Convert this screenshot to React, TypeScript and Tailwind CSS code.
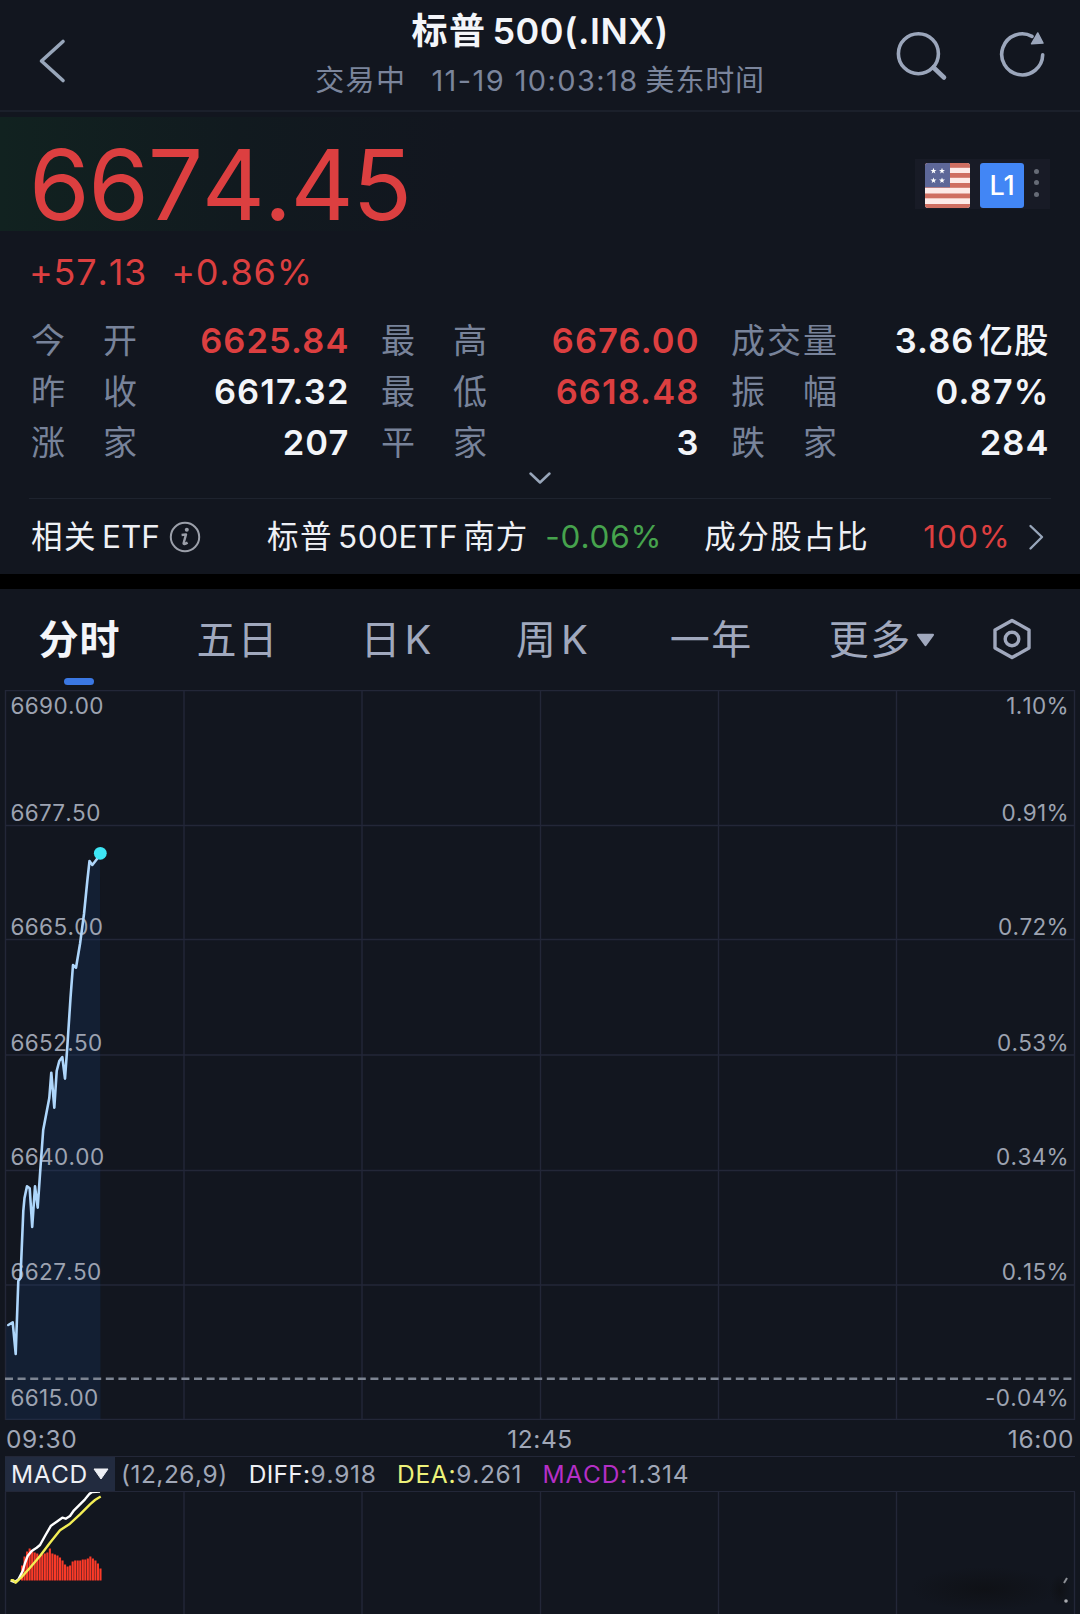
import React from "react";

const RED = "text-[#dc3f40]";
const WHITE = "text-[#f3f5f9]";

type Stat = { label: string; value: string; unit?: string; tone: string };

const stats: Stat[][] = [
  [
    { label: "今开", value: "6625.84", tone: RED },
    { label: "最高", value: "6676.00", tone: RED },
    { label: "成交量", value: "3.86", unit: "亿股", tone: WHITE },
  ],
  [
    { label: "昨收", value: "6617.32", tone: WHITE },
    { label: "最低", value: "6618.48", tone: RED },
    { label: "振幅", value: "0.87%", tone: WHITE },
  ],
  [
    { label: "涨家", value: "207", tone: WHITE },
    { label: "平家", value: "3", tone: WHITE },
    { label: "跌家", value: "284", tone: WHITE },
  ],
];

const gridX = [5.5, 184, 362, 540.5, 718.5, 896.5, 1074.5];
const gridY = [0.5, 135.5, 249.5, 365, 480.5, 595, 729.5];

const axis = [
  { price: "6690.00", pct: "1.10%", place: "top-[2px]" },
  { price: "6677.50", pct: "0.91%", place: "top-[109px]" },
  { price: "6665.00", pct: "0.72%", place: "top-[223px]" },
  { price: "6652.50", pct: "0.53%", place: "top-[339px]" },
  { price: "6640.00", pct: "0.34%", place: "top-[453px]" },
  { price: "6627.50", pct: "0.15%", place: "top-[568px]" },
  { price: "6615.00", pct: "-0.04%", place: "top-[694px]" },
];

const pricePoints: [number, number][] = [
  [8.3, 635], [12.7, 632.3], [15.7, 664], [18.3, 591], [20.5, 588], [23.3, 521], [24.5, 508],
  [27, 496.3], [29.7, 498.3], [32.2, 537], [35, 496.3], [37.7, 517.7], [40.5, 477], [43.2, 440],
  [49.3, 408], [51.3, 382.7], [54.3, 417.7], [56.7, 381], [59.3, 371], [62.3, 367], [65, 388.7],
  [67.5, 354], [70.5, 308], [73, 275], [76, 277.7], [80, 254], [84, 224], [87.3, 191],
  [89.5, 171], [92.3, 175], [97, 169], [100, 163.3],
];

const bars = [
  15, 24, 29, 32, 30, 28, 27, 25, 26, 27, 28, 32, 27, 26, 25, 23, 20, 16, 14, 15, 19, 20, 20, 20,
  21, 21, 22, 24, 22, 20, 17, 12,
];

const toPath = (pts: [number, number][]) => pts.map(([x, y]) => `${x},${y}`).join(" ");

function Header() {
  return (
    <header className="flex h-[112px] items-start justify-between border-b-2 border-[#1b202b]">
      <svg className="h-[100px] w-[260px]" viewBox="0 0 260 100" fill="none">
        <path d="M63 41.5L41.5 61L63 80.5" stroke="#98a6ba" strokeWidth="3.6" strokeLinecap="round" strokeLinejoin="round" />
      </svg>
      <div className="flex flex-col items-center">
        <h1 className="mt-[13px] flex h-9 items-center text-[36px] leading-9 font-semibold whitespace-nowrap text-[#f3f5f9]">
          <span className="tracking-[1.5px]">标普</span>
          <span className="ml-[6px] tracking-[0.5px]">500(.INX)</span>
        </h1>
        <div className="mt-3 flex h-10 items-center text-[29px] leading-10 whitespace-nowrap text-[#7b859c]">
          <span className="tracking-[1.4px]">交易中</span>
          <span className="ml-[25px] tracking-[1.4px] [font-kerning:none]">11-19 10:03:18</span>
          <span className="ml-[7px] tracking-[0.8px]">美东时间</span>
        </div>
      </div>
      <svg className="h-[100px] w-[260px]" viewBox="820 0 260 100" fill="none" stroke="#9ba6bb" strokeWidth="3.6" strokeLinecap="round">
        <circle cx="918.4" cy="53.7" r="20" />
        <path d="M933.5 67.5L944 77.5" strokeWidth="4.6" />
        <path d="M1042.7 54.8A20.5 20.5 0 1 1 1032 36.4" />
        <path d="M1037.8 33L1043 43L1031.5 43.8Z" fill="#9ba6bb" strokeWidth="1.5" strokeLinejoin="round" />
      </svg>
    </header>
  );
}

function Flag() {
  return (
    <svg className="size-[45px] rounded-[3px]" viewBox="0 0 45 45">
      <rect width="45" height="45" fill="#fdebe9" />
      {[0, 10, 20, 30.5, 41].map((y) => (
        <rect key={y} y={y} width="45" height="4.8" fill="#cf6f62" />
      ))}
      <rect width="25" height="24.3" fill="#5d6798" />
      {[[8.5, 7.8], [17, 7.8], [8.5, 17.4], [17, 17.4]].map(([x, y]) => (
        <path
          key={`${x}-${y}`}
          transform={`translate(${x} ${y})`}
          d="M0 -3L.8 -.9L3 -.9L1.2 .5L1.8 2.7L0 1.4L-1.8 2.7L-1.2 .5L-3 -.9L-.8 -.9Z"
          fill="#fff"
        />
      ))}
    </svg>
  );
}

function Quote() {
  return (
    <section>
      <div className="mt-[5px] flex h-[114px] items-start justify-between bg-linear-to-r from-[#112220] via-[#111a1f] via-[22%] to-[#12161f] to-[42%] pr-[30px] pl-[29px]">
        <div className={`pt-[20px] text-[98px] leading-[95px] tracking-[-1.4px] [font-kerning:none] ${RED}`}>6674.45</div>
        <div className="mt-[42px] flex h-[50px] items-start bg-[#181b26] pt-1 pr-[10px] pl-[10px]">
          <Flag />
          <div className="ml-[10px] flex h-[45px] w-11 items-center justify-center rounded-[3px] bg-[#4286f5] text-[27px] leading-none font-medium text-white">
            L1
          </div>
          <div className="mt-[6px] ml-[10px] flex flex-col gap-[6.4px] pr-[1px]">
            <i className="size-[5px] rounded-full bg-[#666b76]" />
            <i className="size-[5px] rounded-full bg-[#666b76]" />
            <i className="size-[5px] rounded-full bg-[#666b76]" />
          </div>
        </div>
      </div>
      <div className={`mt-5 flex h-[42px] items-center gap-[24px] pl-[29px] text-[36px] leading-[42px] tracking-[0.8px] [font-kerning:none] ${RED}`}>
        <span>+57.13</span>
        <span>+0.86%</span>
      </div>
      <div className="mt-[22px] h-[153px] pr-[31px] pl-[31px]">
        {stats.map((row, i) => (
          <div key={i} className="grid h-[51.2px] grid-cols-3 items-center gap-x-8">
            {row.map((s) => (
              <div key={s.label} className="flex items-center justify-between leading-[51px]">
                <span className="flex w-[106px] justify-between text-[34px] text-[#78839a]">
                  {s.label.split("").map((c) => (
                    <span key={c}>{c}</span>
                  ))}
                </span>
                <span className={`-mr-[0.5px] flex text-[34.5px] font-semibold whitespace-nowrap ${s.tone}`}>
                  <span className="tracking-[1.1px]">{s.value}</span>
                  {s.unit && <span className="ml-[4px] font-medium tracking-[1px]">{s.unit}</span>}
                </span>
              </div>
            ))}
          </div>
        ))}
      </div>
      <div className="mx-[29px] flex h-[31px] justify-center border-b border-[#1e232e]">
        <svg className="mt-[3px] h-4 w-6" viewBox="0 0 24 16" fill="none">
          <path d="M2.5 2.5L12 11.5L21.5 2.5" stroke="#98a6ba" strokeWidth="2.5" strokeLinecap="round" strokeLinejoin="round" />
        </svg>
      </div>
    </section>
  );
}

function EtfRow() {
  return (
    <section className="flex h-[75px] items-center pl-[31px] text-[31.5px] leading-[74px] whitespace-nowrap text-[#eef0f5]">
      <span className="tracking-[1.5px]">相关</span>
      <span className="ml-[5px]">ETF</span>
      <svg className="ml-[9px] size-8" viewBox="0 0 32 32" fill="none">
        <circle cx="16" cy="16" r="14.2" stroke="#9b9fa9" strokeWidth="2" />
        <circle cx="17.8" cy="8.8" r="2" fill="#9b9fa9" />
        <path d="M12.6 14L17 13.4L14.6 22.2Q14.4 24 18.6 21.6" stroke="#9b9fa9" strokeWidth="2.4" strokeLinejoin="round" />
      </svg>
      <span className="ml-[66px] tracking-[1.5px]">标普</span>
      <span className="ml-[5px] tracking-[0.6px]">500ETF</span>
      <span className="ml-[5px] tracking-[1px]">南方</span>
      <span className="ml-[17px] tracking-[0.8px] text-[#46a34d]">-0.06%</span>
      <span className="ml-[42px] tracking-[1.5px]">成分股占比</span>
      <span className={`ml-[54px] tracking-[1px] ${RED}`}>100%</span>
      <svg className="ml-[16px] h-8 w-5" viewBox="0 0 20 32" fill="none">
        <path d="M3.5 5L15 16L3.5 27.5" stroke="#98a6ba" strokeWidth="2.4" strokeLinecap="round" strokeLinejoin="round" />
      </svg>
    </section>
  );
}

function Tabs() {
  return (
    <nav className="flex h-[101px] items-center pl-[38.5px] text-[40px] leading-[100px] whitespace-nowrap text-[#a0a8bd]">
      <span className="relative font-bold tracking-[1px] text-[#f3f5f9]">
        分时
        <span className="absolute bottom-[5px] left-[25px] h-[7px] w-[30px] rounded-full bg-[#3b78e3]" />
      </span>
      <span className="ml-[76px] tracking-[1px]">五日</span>
      <span className="ml-[82px]">日</span>
      <span className="ml-[4px]">K</span>
      <span className="ml-[84.5px]">周</span>
      <span className="ml-[5px]">K</span>
      <span className="ml-[82px] tracking-[1.5px]">一年</span>
      <span className="ml-[76px] tracking-[1.5px]">更多</span>
      <svg className="ml-[4px] h-4 w-[19px]" viewBox="0 0 19 16">
        <path d="M2 2.8H17L9.5 13.2Z" fill="#a0a8bd" stroke="#a0a8bd" strokeWidth="2" strokeLinejoin="round" />
      </svg>
      <svg className="-mt-[1px] ml-[56px] h-[44px] w-[42px]" viewBox="0 0 42 44" fill="none" stroke="#a0a8bd" strokeWidth="3.4" strokeLinejoin="round">
        <path d="M21 3.4L38 13V31L21 40.6L4 31V13Z" />
        <circle cx="21" cy="22" r="6.8" />
      </svg>
    </nav>
  );
}

function PriceChart() {
  return (
    <section className="relative h-[730px] text-[22.5px] leading-[28px] text-[#9da3b1]">
      <svg className="absolute inset-0" width="1080" height="730" viewBox="0 0 1080 730" fill="none">
        <g stroke="#232738" strokeWidth="1.4">
          {gridX.map((x) => (
            <path key={x} d={`M${x} 0V730`} />
          ))}
          {gridY.map((y) => (
            <path key={y} d={`M5 ${y}H1075`} />
          ))}
        </g>
        <polygon points={`6,729.5 6,635 ${toPath(pricePoints)} 100.5,729.5`} fill="#1c4a8c" fillOpacity="0.19" />
      </svg>
      {axis.map((a) => (
        <div
          key={a.price}
          className={`absolute right-[11px] left-[10.5px] flex justify-between tracking-[0.35px] [font-kerning:none] ${a.place}`}
        >
          <span>{a.price}</span>
          <span>{a.pct}</span>
        </div>
      ))}
      <svg className="absolute inset-0" width="1080" height="730" viewBox="0 0 1080 730" fill="none">
        <path d="M5 688.7H1074" stroke="#7c8492" strokeWidth="2.6" strokeDasharray="8 4.6" />
        <polyline points={toPath(pricePoints)} stroke="#aed6fb" strokeWidth="2.6" strokeLinejoin="round" strokeLinecap="round" />
        <circle cx="100.3" cy="163.3" r="6.4" fill="#3ee6f5" />
      </svg>
    </section>
  );
}

function Macd() {
  return (
    <section>
      <div className="mx-[5px] flex h-[36px] items-center border-y border-[#232738] text-[24.5px] leading-[34px] tracking-[0.7px] whitespace-nowrap text-[#a0a7b7] [font-kerning:none]">
        <span className="flex h-full w-[110px] items-center bg-[#222b3f] pl-[6px] tracking-[0.5px] text-[#eef0f5]">
          MACD
          <svg className="ml-[4px] h-3 w-[18px] shrink-0" viewBox="0 0 18 12">
            <path d="M2 1H16L9 11Z" fill="#eef0f5" stroke="#eef0f5" strokeLinejoin="round" />
          </svg>
        </span>
        <span className="ml-[6px] tracking-[0.5px]">(12,26,9)</span>
        <span className="ml-[21px] tracking-[0.3px] text-[#eef0f5]">DIFF:</span>
        <span>9.918</span>
        <span className="ml-[20.5px] text-[#eef27a]">DEA:</span>
        <span>9.261</span>
        <span className="ml-[20.5px] text-[#b52fc6]">MACD:</span>
        <span>1.314</span>
      </div>
      <svg className="block" width="1080" height="123" viewBox="0 1491 1080 123" fill="none">
        <defs>
          <radialGradient id="shade">
            <stop offset="0" stopColor="#0f1116" />
            <stop offset="1" stopColor="#0f1116" stopOpacity="0" />
          </radialGradient>
        </defs>
        <ellipse cx="985" cy="1588" rx="75" ry="22" fill="url(#shade)" />
        <g stroke="#232738" strokeWidth="1.4">
          {gridX.map((x) => (
            <path key={x} d={`M${x} 1490V1614`} />
          ))}
        </g>
        <ellipse cx="1060" cy="1589" rx="10" ry="16" fill="url(#shade)" />
        <path d="M1064 1582L1067 1577" stroke="#8d9096" strokeWidth="2" />
        <circle cx="1066" cy="1600" r="1.8" fill="#a9abb0" />
        {bars.map((h, i) => (
          <rect key={i} x={21 + i * 2.53} y={1579.5 - h} width="2.1" height={h} fill="#fb3a28" />
        ))}
        <polyline
          points="10.7,1579.5 15,1581 18.3,1578.5 22.7,1570 25,1562 27.7,1555 31.7,1550 36.7,1546.7 40,1544 45,1535 51,1524.7 56.7,1520.7 62.3,1516.7 65.7,1517.7 70,1515 74,1509.3 80,1503.3 85,1498.3 89.3,1493 92,1491 100,1490.5"
          stroke="#fff"
          strokeWidth="2.4"
          strokeLinejoin="round"
        />
        <polyline
          points="10.7,1579.3 13.3,1579.3 15.7,1581.7 21.7,1576 30,1566.7 40,1555 50,1541.7 60,1529.3 70,1522.7 80,1513.3 90,1503.3 95,1499 100.7,1495.5"
          stroke="#f3ee55"
          strokeWidth="2.4"
          strokeLinejoin="round"
        />
      </svg>
    </section>
  );
}

export default function App() {
  return (
    <main className="h-[1614px] w-[1080px] overflow-hidden bg-[#12161f] font-['Inter','Noto_Sans_CJK_SC',sans-serif]">
      <Header />
      <Quote />
      <EtfRow />
      <div className="h-[15px] bg-black" />
      <Tabs />
      <PriceChart />
      <div className="grid h-[36px] grid-cols-3 px-[6px] text-[24.5px] leading-[38px] tracking-[0.6px] text-[#a0a7b7] [font-kerning:none]">
        <span>09:30</span>
        <span className="text-center">12:45</span>
        <span className="text-right">16:00</span>
      </div>
      <Macd />
    </main>
  );
}
